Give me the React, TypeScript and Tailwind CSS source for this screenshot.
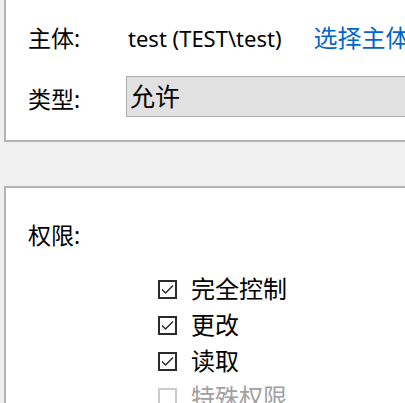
import React from "react";

const font = { fontFamily: '"Noto Sans", "Noto Sans CJK SC", sans-serif' };

function Check({ checked, disabled, label }: { checked: boolean; disabled?: boolean; label: string }) {
  return (
    <div className="flex items-center h-[36px]">
      <div
        className={
          "shrink-0 box-border w-[19px] h-[19px] border-2 flex items-center justify-center " +
          (disabled ? "border-[#cccccc]" : "border-[#2b2b2b]")
        }
      >
        {checked && (
          <svg width="15" height="15" viewBox="0 0 15 15" className="block shrink-0">
            <path d="M2 7.5 L5.5 11 L13 3.5" fill="none" stroke="#2b2b2b" strokeWidth="1.5" />
          </svg>
        )}
      </div>
      <span className={"ml-[14px] text-[24px] leading-none whitespace-nowrap " + (disabled ? "text-[#a0a0a0]" : "text-black")}>
        {label}
      </span>
    </div>
  );
}

export default function App() {
  return (
    <div className="w-[405px] h-[403px] bg-[#f0f0f0] overflow-hidden" style={font}>
      <div className="ml-[4px] h-[142px] bg-white border-l-2 border-b-2 border-[#b4b4b4] pl-[22px] pt-[24px] overflow-hidden">
        <div className="flex items-center h-[28px] leading-none whitespace-nowrap">
          <span className="shrink-0 w-[100px] text-[23px] text-black">主体:</span>
          <span className="shrink-0 text-[22px] text-black">test (TEST\test)</span>
          <span className="shrink-0 ml-[32px] text-[24px] text-[#0066cc]">选择主体</span>
        </div>
        <div className="flex items-center mt-[24px] whitespace-nowrap">
          <span className="shrink-0 w-[98px] text-[23px] leading-none text-black pt-[6px]">类型:</span>
          <div className="flex-1 h-[41px] bg-[#e1e1e1] border border-[#adadad] border-r-0 flex items-center pl-[3px]">
            <span className="text-[25px] leading-none text-black">允许</span>
          </div>
        </div>
      </div>
      <div className="mt-[44px] ml-[4px] h-[300px] bg-white border-l-2 border-t-2 border-[#b4b4b4] pl-[22px] pt-[36px]">
        <div className="text-[23px] leading-none text-black">权限:</div>
        <div className="ml-[130px] mt-[24px] flex flex-col">
          <Check checked label="完全控制" />
          <Check checked label="更改" />
          <Check checked label="读取" />
          <Check checked={false} disabled label="特殊权限" />
        </div>
      </div>
    </div>
  );
}
